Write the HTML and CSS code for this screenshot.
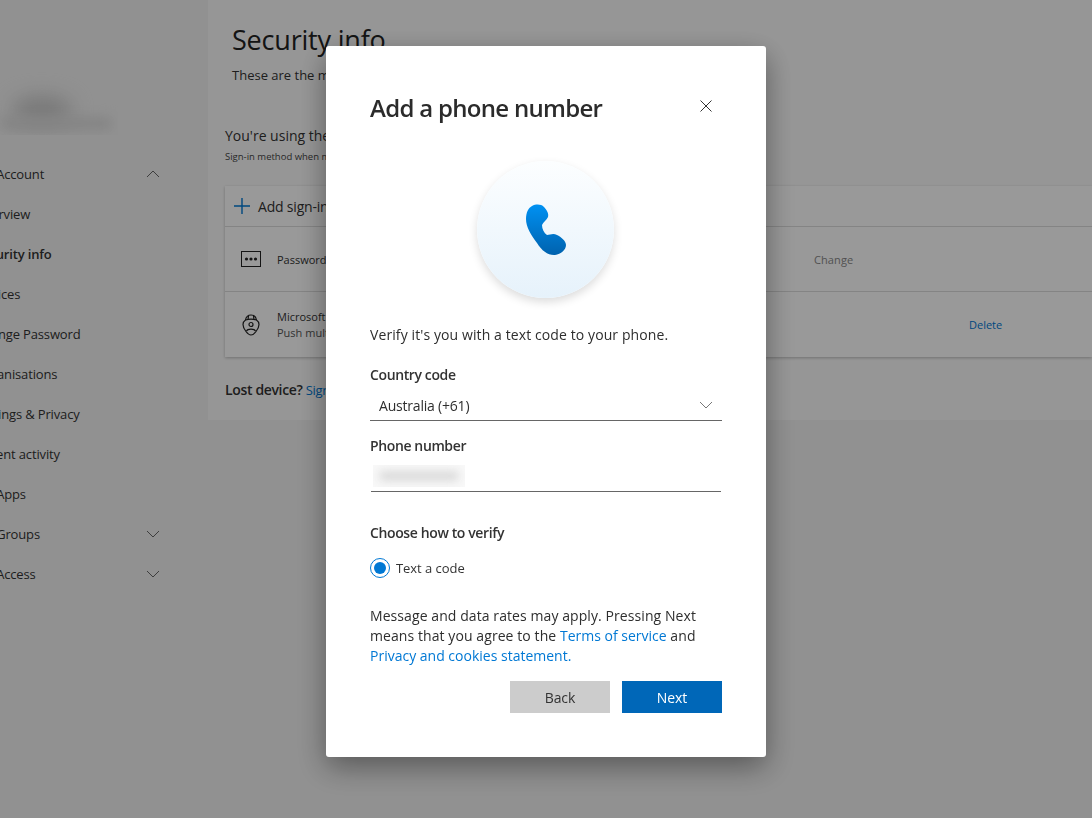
FILE: index.html
```html
<!DOCTYPE html>
<html lang="en">
<head>
<meta charset="utf-8">
<title>Security info</title>
<link rel="stylesheet" href="styles.css">
</head>
<body>
<div class="page">
  <aside class="sidebar">
    <div class="profile"><div class="smudge-a"></div><div class="smudge-b"></div></div>
    <nav class="nav">
      <div class="nav-row">My Account<svg class="chev" viewBox="0 0 14 8"><path d="M1 7l6-6 6 6"/></svg></div>
      <div class="nav-row">Overview</div>
      <div class="nav-row nav-active">Security info</div>
      <div class="nav-row">Devices</div>
      <div class="nav-row">Change Password</div>
      <div class="nav-row">Organisations</div>
      <div class="nav-row">Settings &amp; Privacy</div>
      <div class="nav-row">Recent activity</div>
      <div class="nav-row">My Apps</div>
      <div class="nav-row">My Groups<svg class="chev" viewBox="0 0 14 8"><path d="M1 1l6 6 6-6"/></svg></div>
      <div class="nav-row">My Access<svg class="chev" viewBox="0 0 14 8"><path d="M1 1l6 6 6-6"/></svg></div>
    </nav>
  </aside>
  <main class="main">
    <h1 class="page-title">Security info</h1>
    <p class="page-sub">These are the methods you use to sign into your account.</p>
    <p class="using">You're using the most advisable sign-in method.</p>
    <p class="using-sub">Sign-in method when most advisable is unavailable.</p>
    <section class="card">
      <div class="card-add">
        <svg class="plus" viewBox="0 0 16 16"><path d="M8 0v16M0 8h16"/></svg>
        <span>Add sign-in method</span>
      </div>
      <div class="card-row">
        <svg class="row-icon" viewBox="0 0 20 16"><rect x=".5" y=".5" width="19" height="15"/><circle cx="5.500" cy="8" r="1.600"/><circle cx="10" cy="8" r="1.600"/><circle cx="14.500" cy="8" r="1.600"/></svg>
        <div class="row-text row-text-single">Password</div>
        <div class="row-change">Change</div>
      </div>
      <div class="card-row card-row-last">
        <svg class="row-icon row-icon-auth" viewBox="0 0 18 22"><path d="M9 1C6 1 4 3 3.500 6 2 7 1 8.500 1 10.500c0 3 1.500 5 3 7 1.500 2 3 3.500 5 3.500s3.500-1.500 5-3.500c1.500-2 3-4 3-7C17 8.500 16 7 14.500 6 14 3 12 1 9 1z"/><path d="M3.500 6C6.500 5 11.500 5 14.500 6M6.500 1.800 6 5.300M11.500 1.800 12 5.300"/><circle cx="9" cy="10.500" r="2"/><path d="M4.500 17c1-2.500 8-2.500 9 0"/></svg>
        <div class="row-text">Microsoft Authenticator<br><span class="row-detail">Push multi-factor authentication</span></div>
        <div class="row-delete">Delete</div>
      </div>
    </section>
    <p class="lost">Lost device? <a class="lost-link">Sign out everywhere</a></p>
  </main>
</div>
<div class="overlay">
  <div class="dialog">
    <header class="dialog-head">
      <h2 class="dialog-title">Add a phone number</h2>
      <svg class="close" viewBox="0 0 12 12"><path d="M.5.500l11 11M11.500.500l-11 11"/></svg>
    </header>
    <div class="hero">
      <svg class="phone" viewBox="0 0 40 52">
        <defs><linearGradient id="pg" x1="0" y1="0" x2="0" y2="1"><stop offset="0" stop-color="#0091f2"/><stop offset="1" stop-color="#0062ae"/></linearGradient></defs>
        <path fill="url(#pg)" d="M6 2C10 0 15 0 18 3c3 3 5 7 4 10-1 3-5 5-6 8 0 4 2 8 5 10 3 0 6-2 10 0 4 2 9 6 9 10 0 5-5 9-11 10-7 .5-13-4-18-12C5 31 0 23 0 15 0 9 2 4 6 2z"/>
      </svg>
    </div>
    <p class="verify">Verify it's you with a text code to your phone.</p>
    <div class="label label-country">Country code</div>
    <div class="select">Australia (+61)<svg class="select-chev" viewBox="0 0 14 8"><path d="M1 1l6 6 6-6"/></svg></div>
    <div class="label label-phone">Phone number</div>
    <div class="input"><div class="masked"><div class="masked-ink"></div></div></div>
    <div class="label label-choose">Choose how to verify</div>
    <div class="radio-row"><span class="radio"><span class="radio-dot"></span></span>Text a code</div>
    <p class="terms">Message and data rates may apply. Pressing Next means that you agree to the <a class="link">Terms of service</a> and <a class="link">Privacy and cookies statement.</a></p>
    <div class="buttons">
      <button class="btn btn-back">Back</button>
      <button class="btn btn-next">Next</button>
    </div>
  </div>
</div>
</body>
</html>
```
FILE: styles.css
```css
* { box-sizing: border-box; }
html, body { margin: 0; padding: 0; height: 100%; overflow: hidden; }
body {
  background: #f2f2f2;
  color: #1f1f1f;
  font-family: "Open Sans", "Noto Sans", sans-serif;
  font-size: 14px;
}
p, h1, h2 { margin: 0; font-weight: 400; }
.page { display: flex; height: 818px; overflow: hidden; }
.sidebar { width: 208px; flex: none; overflow: hidden; }
.profile { height: 135px; width: 118px; position: relative; overflow: hidden; margin-bottom: 19px; }
.smudge-a { position: absolute; left: 12px; top: 96px; width: 60px; height: 28px; border-radius: 50%; background: #c8c8c8; filter: blur(10px); }
.smudge-b { position: absolute; left: 0; top: 117px; width: 112px; height: 13px; border-radius: 6px; background: #dcdcdc; filter: blur(6px); }
.nav { margin-left: -25px; }
.nav-row { height: 40px; width: 193px; display: flex; align-items: center; justify-content: space-between; color: #333; font-size: 13px; letter-spacing: -.15px; padding-right: 8px; }
.nav-active { font-weight: 600; }
.chev { width: 14px; height: 8px; fill: none; stroke: #666; stroke-width: 1; }
.main { flex: 1; height: 420px; background: #fbfbfb; padding: 24px 0 0 17px; overflow: hidden; white-space: nowrap; }
.page-title { font-size: 27px; line-height: 32px; color: #222; margin-left: 7px; letter-spacing: -.2px; }
.page-sub { font-size: 13px; line-height: 20px; color: #333; margin: 9px 0 0 7px; }
.using { font-size: 14px; line-height: 22px; color: #333; margin-top: 40px; }
.using-sub { font-size: 9.500px; line-height: 14px; color: #444; margin-top: 3px; }
.card { margin-top: 22px; background: #fff; box-shadow: 0 1px 3px rgba(0,0,0,.25); height: 171px; }
.card-add { height: 41px; display: flex; align-items: center; padding-left: 9px; gap: 8px; border-bottom: 1px solid #ddd; color: #333; letter-spacing: -.2px; }
.plus { width: 16px; height: 16px; fill: none; stroke: #0078d4; stroke-width: 1.4; }
.card-row { height: 65px; display: flex; align-items: center; border-bottom: 1px solid #ddd; padding-left: 16px; }
.card-row-last { border-bottom: 0; }
.row-icon { width: 20px; height: 16px; flex: none; fill: #222; stroke: none; }
.row-icon rect { fill: none; stroke: #222; stroke-width: 1; }
.row-icon-auth { height: 22px; fill: none; stroke: #222; stroke-width: 1.200; }
.row-text { width: 537px; margin-left: 16px; font-size: 11px; line-height: 16px; color: #333; }
.row-text-single { padding-top: 2px; }
.row-detail { color: #555; }
.row-change { font-size: 11px; color: #888; letter-spacing: .1px; }
.row-delete { font-size: 11px; color: #0078d4; margin-left: 155px; }
.lost { margin-top: 23px; font-weight: 600; font-size: 14px; line-height: 20px; color: #333; letter-spacing: -.35px; }
.lost-link { color: #0078d4; font-weight: 400; font-size: 13px; }
.overlay { position: fixed; inset: 0; background: rgba(0,0,0,.4); display: flex; justify-content: center; align-items: flex-start; padding-top: 46px; }
.dialog { width: 440px; height: 711px; background: #fff; border-radius: 3px; padding: 46px 44px 44px; box-shadow: 0 10px 30px rgba(0,0,0,.4); color: #2e2e2e; letter-spacing: .1px; }
.dialog-head { display: flex; justify-content: space-between; align-items: center; height: 32px; padding-right: 10px; }
.dialog-title { font-size: 24px; line-height: 32px; font-weight: 600; letter-spacing: -.7px; color: #2b2b2b; margin-top: -1px; }
.close { width: 12px; height: 12px; fill: none; stroke: #333; stroke-width: 1; margin-top: -4px; }
.hero { width: 137px; height: 137px; margin: 37px 0 0 107px; border-radius: 50%; background: linear-gradient(#fcfeff, #e6f2fb); box-shadow: 0 4px 10px rgba(0,0,0,.14); display: flex; align-items: center; justify-content: center; }
.phone { width: 40px; height: 52px; }
.verify { line-height: 20px; margin-top: 27px; }
.label { font-weight: 600; line-height: 20px; color: #333; letter-spacing: -.38px; }
.label-country { margin-top: 20px; }
.select { height: 36px; margin-top: 0; padding: 11px 9px 0; line-height: 20px; border-bottom: 1px solid #666; display: flex; justify-content: space-between; align-items: flex-start; letter-spacing: -.2px; }
.select-chev { width: 14px; height: 8px; fill: none; stroke: #777; stroke-width: 1; margin-top: 5px; }
.label-phone { margin-top: 15px; }
.input { height: 36px; margin: 0 1px; border-bottom: 1px solid #666; padding: 9px 0 0 2px; }
.masked { width: 92px; height: 22px; background: #f8f8f8; overflow: hidden; padding: 6px 6px; }
.masked-ink { height: 10px; background: #dadada; border-radius: 5px; filter: blur(4px); }
.label-choose { margin-top: 31px; }
.radio-row { display: flex; align-items: center; gap: 6px; height: 20px; margin-top: 15px; color: #333; font-size: 13px; letter-spacing: -.05px; }
.radio { width: 20px; height: 20px; border-radius: 50%; border: 1px solid #0078d4; display: flex; align-items: center; justify-content: center; }
.radio-dot { width: 12px; height: 12px; border-radius: 50%; background: #0078d4; }
.terms { line-height: 20px; margin-top: 28px; letter-spacing: .08px; }
.link { color: #0078d4; letter-spacing: 0; }
.buttons { display: flex; justify-content: flex-end; gap: 12px; margin-top: 15px; }
.btn { width: 100px; height: 32px; border: 0; font: inherit; letter-spacing: -.1px; padding: 0; }
.btn-back { background: #ccc; color: #333; }
.btn-next { background: #0067b8; color: #fff; }
```
